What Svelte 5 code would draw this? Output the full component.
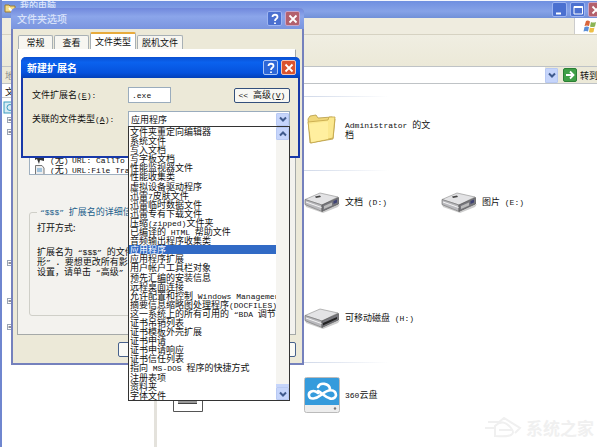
<script>
  const types = [
    '文件夹重定向编辑器', '系统文件', '写入文档', '写字板文档', '性能监视器文件', '性能收集类',
    '虚拟设备驱动程序', '迅雷7皮肤文件', '迅雷临时数据文件', '迅雷专有下载文件', '压缩(zipped)文件夹',
    '已编译的 HTML 帮助文件', '音频输出程序收集类', '应用程序', '应用程序扩展', '用户帐户工具栏对象',
    '预先汇编的安装信息', '远程桌面连接', '允许配置和控制 Windows Management', '摘要信息缩略图处理程序(DOCFILES)',
    '这一系统上的所有可用的 “BDA 调节', '证书吊销列表', '证书模板外壳扩展', '证书申请', '证书申请响应',
    '证书信任列表', '指向 MS-DOS 程序的快捷方式', '注册表项', '资料夹', '字体文件'
  ];
  let selected = $state('应用程序');
  let extension = $state('.exe');
  const tabs = ['常规', '查看', '文件类型', '脱机文件'];
  // Latin runs are set in a narrower monospace face than the Chinese ones
  const runs = (s) => s.match(/[\x20-\x7e“”]+|[^\x20-\x7e“”]+/g) ?? [];
  const latin = (r) => /^[\x20-\x7e“”]/.test(r);
</script>

{#snippet text(s)}{#each runs(s) as r}{#if latin(r)}<span class="en">{r}</span>{:else}{r}{/if}{/each}{/snippet}

{#snippet chevron(up)}
  <svg viewBox="0 0 12 12" width="12" height="12" aria-hidden="true">
    <path d={up ? 'M3 7.5 6 4.5 9 7.5' : 'M3 4.5 6 7.5 9 4.5'} fill="none" stroke="#3f5a8c" stroke-width="2" />
  </svg>
{/snippet}

{#snippet captionButtons()}
  <button class="cap" aria-label="帮助">
    <svg viewBox="0 0 14 14" width="14" height="14"><path d="M4.5 5C4.5 2 9.5 2 9.5 5C9.5 7 7 6.7 7 9M7 10.5V12" fill="none" stroke="#fff" stroke-width="1.8" /></svg>
  </button>
  <button class="cap close" aria-label="关闭">
    <svg viewBox="0 0 14 14" width="14" height="14"><path d="M3.5 3.5 10.5 10.5M10.5 3.5 3.5 10.5" stroke="#fff" stroke-width="1.8" /></svg>
  </button>
{/snippet}

{#snippet drive(removable)}
  <svg viewBox="0 0 36 21" width="36" height="21" aria-hidden="true">
    <path d="M1 12 18 20 36 12 34 15 19 21 2 15Z" fill="#ccc" />
    <path d="M1 7.5 16 1 34 5 18 13Z" fill="#e3e3e5" stroke="#999" stroke-width=".7" />
    <path d="M1 7.5 18 13V19.5L1 12.5Z" fill="#b9b9bd" stroke="#777" stroke-width=".7" />
    <path d="M18 13 34.500 5.500V12L18 19.500Z" fill="#77777d" stroke="#555" stroke-width=".7" />
    <path d="M2 10 17.500 15.500" stroke="#f4f4f4" />
    {#if removable}
      <path d="M19 15 33 9V11L19 17.500Z" fill="#222" />
    {:else}
      <path d="M11 4.500 16 3.500 17 5 12 6Z" fill="#444" />
      <path d="M20 14 28 10.500V13.500L20 17Z" fill="#bbb" />
      <path d="M29.500 9 33 7.500V10.500L29.500 12Z" fill="#3f4274" />
    {/if}
  </svg>
{/snippet}

<main>
  <section class="explorer">
    <header class="title">
      <svg viewBox="0 0 12 10" width="12" height="10" aria-hidden="true"><path d="M1 2H5L6 3H11V9H1Z" fill="#f5dc85" stroke="#9a7b35" /><path d="M5 5 9 9" stroke="#fff" stroke-width="2" /></svg>
      <h1>我的电脑</h1>
      <button class="cap" aria-label="最小化"><svg viewBox="0 0 14 14" width="14" height="14"><path d="M3 10.500H8" stroke="#fff" stroke-width="2" /></svg></button>
      <button class="cap" aria-label="最大化"><svg viewBox="0 0 14 14" width="14" height="14"><path d="M3 3.500H11.500V11H3Z" fill="none" stroke="#fff" /><path d="M3 4H11.500" stroke="#fff" stroke-width="2" /></svg></button>
      <button class="cap close" aria-label="关闭"><svg viewBox="0 0 14 14" width="14" height="14"><path d="M3.500 3.500 10.500 10.500M10.500 3.500 3.500 10.500" stroke="#fff" stroke-width="1.8" /></svg></button>
    </header>
    <div class="menu">
      <div class="flag">
        <svg viewBox="0 0 14 13" width="14" height="13" aria-hidden="true">
          <path d="M3 1Q5 0 7 1.500L6 6Q4 5 1.500 6Z" fill="#d9653b" /><path d="M8 2Q10 3 13 2L12 6.500Q9 7.500 7 6.500Z" fill="#8bb455" />
          <path d="M1.500 7Q4 6 6 7L5 11.500Q3 10.500 .5 11.500Z" fill="#5b8ed6" /><path d="M6.800 7.500Q9 8.500 11.500 7.500L10.500 12Q8 13 6 12Z" fill="#eebf45" />
        </svg>
      </div>
    </div>
    <div class="tools"></div>
    <div class="address">
      <label for="addr">地址</label>
      <input id="addr" type="text" />
      <button class="drop" aria-label="展开地址">{@render chevron(false)}</button>
      <button class="go">
        <svg viewBox="0 0 14 14" width="14" height="14" aria-hidden="true"><rect x=".5" y=".5" width="13" height="13" rx="1.500" fill="#3f9f46" stroke="#2b7f35" /><path d="M3 7H10.500M7 3.500 10.500 7 7 10.500" fill="none" stroke="#fff" stroke-width="1.8" /></svg>
        转到
      </button>
    </div>
    <div class="body">
      <nav>
        <h2>文件夹</h2>
        <svg class="tree" viewBox="0 0 10 240" width="10" height="240" aria-hidden="true">
          <rect x="1" y="4" width="11" height="11" fill="#d9ecf4" stroke="#3b9bc0" /><circle cx="7" cy="9.500" r="3" fill="none" stroke="#3b9bc0" />
          {#each [22, 34, 165, 203, 229] as y}
            <rect x="4.500" y={y - 2.500} width="5" height="5" fill="#fff" stroke="#9aa5b5" /><path d="M5.500 {y}H9" stroke="#223" />
          {/each}
        </svg>
      </nav>
      <div class="files">
        <div class="group docs">
          <div class="file">
            <svg viewBox="0 0 36 32" width="36" height="32" aria-hidden="true">
              <path d="M4 6 6 3 12 2 14 5 28 4 31 6 29 26 6 30Z" fill="#f0d77a" stroke="#b59b45" stroke-width=".8" />
              <path d="M4 9 24 7 25 4 31 4 29 25 7 30Z" fill="#fbe88f" stroke="#c3a548" stroke-width=".8" />
              <path d="M5 11 24 8.500V26L7 29Z" fill="#ffef9f" />
            </svg>
            <span>{@render text('Administrator 的文档')}</span>
          </div>
        </div>
        <div class="group drives">
          <div class="file">{@render drive(false)}<span>{@render text('文档 (D:)')}</span></div>
          <div class="file">{@render drive(false)}<span>{@render text('图片 (E:)')}</span></div>
          <div class="file second">{@render drive(true)}<span>{@render text('可移动磁盘 (H:)')}</span></div>
        </div>
        <div class="group other">
          <div class="file first">
            <svg viewBox="0 0 36 36" width="36" height="36" aria-hidden="true"><path d="M6.500 2.500H35.500V34.500H6.500Z" fill="#fff" stroke="#555" /><path d="M11 20H30V26H11Z" fill="#999" /><path d="M11 26.500H30" stroke="#444" /></svg>
          </div>
          <div class="file">
            <svg viewBox="0 0 36 36" width="36" height="36" aria-hidden="true">
              <rect x=".5" y=".5" width="35" height="35" rx="2" fill="#ededed" stroke="#bbb" /><path d="M1 2Q1 1 2 1H34Q35 1 35 2V28H1Z" fill="#359bdc" />
              <path d="M14 16C9 12 4 15 5 19C6 23 12 22 17 18C22 14 27 11 31 15C34 20 29 23 25 21C21 20 18 16 14 14M14 10C16 5 25 6 26 12" fill="none" stroke="#fff" stroke-width="2.600" stroke-linecap="round" />
              <circle cx="31" cy="31.500" r="1.200" fill="#777" />
            </svg>
            <span>{@render text('360云盘')}</span>
          </div>
        </div>
      </div>
    </div>
    <div class="mark">
      <svg viewBox="0 0 38 24" width="38" height="24" aria-hidden="true"><path d="M0 12H10M3 6H14L19 2 35 12 30 17M10 10Q18 2 26 12T10 20ZM14 14H28" fill="none" stroke="#f0f0f0" stroke-width="2" /></svg>
      系统之家
    </div>
  </section>

  <section class="dialog options">
    <header><h2>文件夹选项</h2>{@render captionButtons()}</header>
    <div class="tabs">
      {#each tabs as tab}<button class:active={tab === '文件类型'}>{tab}</button>{/each}
    </div>
    <div class="page">
      <div class="registered">
        <p><svg viewBox="0 0 11 10" width="11" height="10" aria-hidden="true"><path d="M1 0V5L3 4 5 9 6 5 10 6V1Z" fill="#333" /><path d="M3 1H8V3H3Z" fill="#cde" /></svg><b>{@render text('(无)')}</b>{@render text('URL: CallTo')}</p>
        <p><svg viewBox="0 0 11 10" width="11" height="10" aria-hidden="true"><path d="M1.500 .5H8L10 3V9.500H1.500Z" fill="#eee" stroke="#777" /><path d="M3 4H8M3 6H8" stroke="#59c" /></svg><b>{@render text('(无)')}</b>{@render text('URL:File Tra')}</p>
      </div>
      <fieldset>
        <legend>{@render text('“$$$” 扩展名的详细信息')}</legend>
        <p class="opens">打开方式:</p>
        <p>{@render text('扩展名为 “$$$” 的文件')}<br />{@render text('形” ．要想更改所有影')}<br />{@render text('设置，请单击 “高级”')}</p>
      </fieldset>
    </div>
    <footer><button aria-label="确定"></button></footer>
  </section>

  <section class="dialog create">
    <header><h2>新建扩展名</h2>{@render captionButtons()}</header>
    <form>
      <label for="ext">{@render text('文件扩展名(')}<u class="en">E</u>{@render text('):')}</label>
      <div class="line">
        <input id="ext" type="text" bind:value={extension} />
        <button type="button" class="adv">{@render text('<< 高级(')}<u class="en">V</u>{@render text(')')}</button>
      </div>
      <label for="type">{@render text('关联的文件类型(')}<u class="en">A</u>{@render text('):')}</label>
      <div class="combo">
        <select id="type" bind:value={selected}>
          {#each types as t}<option>{t}</option>{/each}
        </select>
        <span class="drop">{@render chevron(false)}</span>
        <div class="list">
          <ul role="listbox" aria-label="文件类型">
            {#each types as t}<li role="option" aria-selected={t === selected}>{@render text(t)}</li>{/each}
          </ul>
          <div class="scroll">
            <button class="drop" type="button" aria-label="向上">{@render chevron(true)}</button>
            <i></i>
            <button class="drop" type="button" aria-label="向下">{@render chevron(false)}</button>
          </div>
        </div>
      </div>
    </form>
  </section>
</main>

<style>
  main {
    position: relative;
    height: 100vh;
    overflow: hidden;
    background: #fff;
    color: #111;
    font: 9px/9px "Noto Sans CJK SC", sans-serif;
  }
  main :global(*) { box-sizing: border-box; }
  h1, h2, p, ul { margin: 0; padding: 0; font-size: inherit; }
  button, input, select { font: inherit; color: inherit; padding: 0; margin: 0; border-radius: 0; }
  svg { display: block; flex: none; }
  .en { font-family: "Liberation Mono", monospace; font-size: 8px; white-space: pre; }

  .cap {
    display: flex; align-items: center; justify-content: center; flex: none;
    width: 15px; height: 15px; margin-left: 3px;
    border: 1px solid #9db4f0; border-radius: 2px; background: #4b70d0;
  }
  .cap.close { background: #b3606c; border-color: #c8a5c8; }
  .drop {
    display: flex; align-items: center; justify-content: center; flex: none;
    width: 13px; height: 13px; border: 1px solid #b8c9f3; border-radius: 1px; background: #c6d5fb;
  }

  .explorer { display: flex; flex-direction: column; height: 100%; border-left: 2px solid #6f86cf; }
  .title {
    display: flex; align-items: center; height: 18px; padding-left: 2px; flex: none;
    border-top: 1px solid #f4f6fc; background: linear-gradient(#6f8fe0, #86a2e7 60%, #7190d8);
  }
  .title svg { margin-top: -3px; }
  .title h1 { flex: 1; padding: 0 0 8px 4px; color: #dde6fb; font-weight: 500; }
  .title .cap svg { margin: 0; }
  .title .cap:last-child { margin-right: -6px; }
  .menu { display: flex; justify-content: flex-end; height: 17px; flex: none; background: #efecdf; border-bottom: 1px solid #d6d2c2; }
  .flag { display: flex; align-items: center; width: 23px; padding-left: 8px; background: #fff; border-left: 1px solid #ccc; }
  .tools { height: 31px; flex: none; background: linear-gradient(#f0eee2, #ece9d8); }
  .address { display: flex; align-items: center; height: 18px; flex: none; border: solid #bfc3c6; border-width: 1px 0; background: #ece9d8; }
  .address label { width: 24px; padding-left: 3px; color: #888; }
  .address input { flex: 1; min-width: 0; height: 16px; border: 0; background: #fff; }
  .address .drop { width: 13px; height: 15px; }
  .go { display: flex; align-items: center; gap: 3px; width: 39px; padding-left: 5px; border: 0; background: none; white-space: nowrap; overflow: hidden; }
  .body { display: flex; flex: 1; min-height: 0; }
  nav { width: 155px; border-right: 3px solid #e4e2dc; }
  nav h2 { height: 14px; padding: 3px; font-weight: 400; border-bottom: 1px solid #ccc; }
  .tree { margin-left: 1px; }
  .files { flex: 1; padding-top: 12px; }
  .group { display: grid; grid-template-columns: repeat(3, 137px); align-content: start; padding-left: 10px; position: relative; }
  .group::before { content: ''; grid-column: 1 / -1; height: 1px; background: linear-gradient(90deg, #d3dbea 35%, #fff 54%); }
  .docs { height: 74px; }
  .drives { height: 192px; }
  .file { display: flex; align-items: center; gap: 5px; height: 64px; }
  .file span { width: 90px; }
  .docs .file, .second, .other .file:last-child { grid-column: 2; }
  .drives .file { height: 62px; }
  .drives .file:nth-child(1) { grid-column: 2; }
  .drives .second { margin-top: 54px; }
  .mark { position: absolute; right: 3px; bottom: 7px; display: flex; align-items: center; gap: 3px; font-size: 17px; line-height: 24px; color: #f0f0f0; font-weight: 700; }

  .dialog { position: absolute; border-radius: 5px 5px 0 0; }
  .dialog header { display: flex; align-items: center; height: 21px; border-radius: 5px 5px 0 0; }
  .dialog h2 { flex: 1; font-size: 10px; line-height: 12px; }
  .options {
    left: 11px; top: 8px; width: 293px; height: 357px; display: flex; flex-direction: column;
    background: #ece9d8; border: solid #7581bd; border-width: 0 2px 2px;
  }
  .options header { margin: 0 -2px; padding: 0 4px 0 6px; background: linear-gradient(#7088dc, #8ba5ea 40%, #7a95df); }
  .options h2 { color: #d9e2fa; font-weight: 500; }
  .tabs { display: flex; align-items: flex-end; gap: 1px; height: 20px; padding-left: 5px; }
  .tabs button { height: 14px; padding: 0 3px; width: 35px; border: 1px solid #a8b0b5; border-bottom: 0; border-radius: 2px 2px 0 0; background: #f7f6f1; white-space: nowrap; }
  .tabs button:nth-child(n + 3) { width: 46px; }
  .tabs .active { height: 17px; border-top: 2px solid #e8ab3c; background: #fff; }
  .page { flex: 1; margin: 0 6px 0 4px; padding: 105px 10px 18px 11px; display: flex; flex-direction: column; border: 1px solid #a5a9a8; border-top-color: #fff; background: linear-gradient(#fff, #f3f2ee 40%); overflow: hidden; }
  .registered { height: 20px; overflow: hidden; padding-left: 4px; background: #fff; border: 1px solid #9fb0c0; border-top: 0; flex: none; }
  .registered p { display: flex; align-items: center; height: 10px; white-space: pre; }
  .registered b { width: 27px; padding-left: 5px; font-weight: 400; }
  fieldset { flex: 1; margin: 32px 0 0; padding: 6px 7px; border: 1px solid #cfcfc8; border-radius: 3px; min-width: 0; white-space: nowrap; }
  legend { padding: 0 3px; color: #245f8c; }
  .opens { margin-bottom: 15px; }
  .options footer { height: 28px; flex: none; padding: 7px 6px 0 105px; }
  .options footer button { display: block; width: 100%; height: 15px; border: 1px solid #47618c; border-radius: 2px; background: #fafaf6; }

  .create { left: 21px; top: 57px; width: 279px; height: 101px; border: solid #1738a8; border-width: 0 2px 2px; background: #ece9d8; }
  .create header { margin: 0 -2px; padding: 0 4px 0 6px; background: linear-gradient(#0a4fd0, #0b62ee 25%, #0552dd 75%, #0340b8); }
  .create h2 { color: #fff; font-weight: 700; }
  .create .cap { background: #2d67d8; border-color: #a9c4f5; }
  .create .close { background: #d9532f; border-color: #f0c5b8; }
  form { display: grid; grid-template-columns: 96px minmax(0, 1fr); grid-template-rows: 16px 16px; row-gap: 8px; align-items: center; padding: 9px 8px 0 9px; }
  form label { white-space: nowrap; }
  .line { display: flex; justify-content: space-between; align-items: center; }
  .line input { width: 43px; height: 16px; padding: 0 3px; border: 1px solid #9aacbd; background: #fff; font-family: "Liberation Mono", monospace; font-size: 8px; }
  .adv { height: 15px; width: 56px; border: 1px solid #34507c; border-radius: 2px; background: #f8f8f4; white-space: nowrap; }
  .combo { position: relative; display: flex; align-items: center; height: 16px; background: #fff; border: 1px solid #9aacbd; }
  select { appearance: none; flex: 1; min-width: 0; height: 14px; padding: 0 2px; border: 0; background: #fff; }
  .combo > .drop { pointer-events: none; }
  .list { position: absolute; left: -1px; right: -1px; top: 14px; height: 275px; display: flex; border: 1px solid #333; background: #fff; }
  ul { flex: 1; min-width: 0; display: flex; flex-direction: column; list-style: none; overflow: hidden; }
  li { flex: 1; min-height: 0; padding-left: 1px; white-space: nowrap; }
  li[aria-selected='true'] { background: #316ac5; color: #fff; }
  .scroll { display: flex; flex-direction: column; width: 13px; background: #f5f4f0; }
  .scroll i { flex: 1; border-bottom: 3px solid #c6d5fb; }
</style>
